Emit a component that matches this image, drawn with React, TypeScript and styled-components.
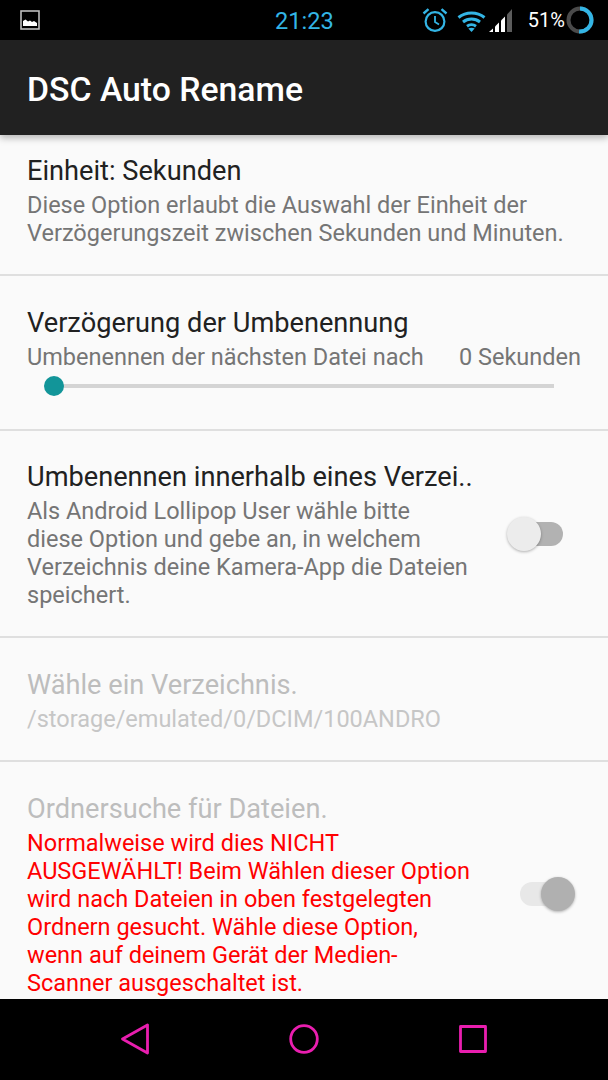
import React from "react"
import styled, { createGlobalStyle } from "styled-components"

const Global = createGlobalStyle`
  html, body { margin: 0; padding: 0; background: #000; }
  body { font-family: Roboto, "Liberation Sans", sans-serif; }
`

const Screen = styled.div`
  width: 608px;
  height: 1080px;
  display: flex;
  flex-direction: column;
  overflow: hidden;
`

const StatusBar = styled.div`
  height: 40px;
  flex: none;
  background: #000;
  position: relative;
  display: flex;
  align-items: center;
  justify-content: space-between;
  padding: 0 14px 0 20px;
  box-sizing: border-box;
`

const Clock = styled.div`
  position: absolute;
  left: 275px;
  top: 7px;
  color: #33b5e5;
  font-size: 23.6px;
  line-height: 28px;
`

const StatusRight = styled.div`
  display: flex;
  align-items: center;
`

const BatteryText = styled.span`
  color: #fff;
  font-size: 20px;
  line-height: 26px;
  margin: 0 1px 0 15px;
`

const AppBar = styled.div`
  height: 95px;
  flex: none;
  background: #212121;
  color: #fff;
  display: flex;
  align-items: center;
  padding: 3px 0 0 27px;
  box-sizing: border-box;
  font-size: 33.75px;
  font-weight: 500;
  position: relative;
  z-index: 1;
  box-shadow: 0 3px 7px rgba(0, 0, 0, 0.28);
`

const List = styled.div`
  flex: 1;
  min-height: 0;
  overflow: hidden;
  background: #fafafa;
`

const Row = styled.div<{ $top: number; $bottom: number }>`
  display: flex;
  align-items: center;
  padding: ${p => p.$top}px 27px ${p => p.$bottom}px;
  border-bottom: 2px solid #dfdfdf;
  &:last-child { border-bottom: 0; }
`

const RowText = styled.div`
  flex: 1;
  min-width: 0;
`

const Title = styled.div<{ $off?: boolean }>`
  font-size: 27.2px;
  line-height: 34px;
  color: ${p => (p.$off ? "#bdbdbd" : "#212121")};
  white-space: nowrap;
`

const Summary = styled.div<{ $off?: boolean; $alert?: boolean }>`
  margin-top: 3px;
  font-size: 23.5px;
  line-height: 28px;
  color: ${p => (p.$alert ? "#ff0000" : p.$off ? "#c6c6c6" : "#757575")};
`

const Narrow = styled.div`
  width: 443px;
`

const SeekLabel = styled(Summary)`
  display: flex;
  justify-content: space-between;
`

const SeekTrack = styled.div`
  position: relative;
  height: 4px;
  margin: 13px 0 14px 27px;
  width: 500px;
  background: #d4d4d4;
`

const SeekThumb = styled.div`
  position: absolute;
  left: -10px;
  top: -8px;
  width: 20px;
  height: 20px;
  border-radius: 50%;
  background: #129599;
`

const SwitchBox = styled.div<{ $inset: number }>`
  position: relative;
  width: 52px;
  height: 36px;
  flex: none;
  margin-right: ${p => p.$inset}px;
  margin-bottom: 2px;
`

const SwitchTrack = styled.div<{ $off?: boolean }>`
  position: absolute;
  top: 6px;
  left: 0;
  width: 52px;
  height: 24px;
  border-radius: 12px;
  background: ${p => (p.$off ? "#e8e8e8" : "#b2b2b2")};
`

const SwitchKnob = styled.div<{ $right?: boolean; $off?: boolean }>`
  position: absolute;
  top: 1px;
  left: ${p => (p.$right ? "21px" : "-4px")};
  width: 34px;
  height: 34px;
  border-radius: 50%;
  background: ${p => (p.$off ? "#b0b0b0" : "#ececec")};
  box-shadow: 0 1px 3px rgba(0, 0, 0, 0.3);
`

const NavBar = styled.div`
  height: 81px;
  flex: none;
  background: #000;
  display: flex;
  align-items: center;
  padding-bottom: 1px;
  box-sizing: border-box;
  padding-left: 121px;
  gap: 140px;
`

function ImageIcon() {
  return (
    <svg width="20" height="20" viewBox="0 0 20 20">
      <rect x="1" y="1" width="18" height="18" fill="#000" stroke="#bdbdbd" strokeWidth="1.6" />
      <path d="M3 16V11L5.5 9.5L8 11.5L10 10.5L12 12L14 11L17 13V16Z" fill="#fff" />
    </svg>
  )
}

function AlarmIcon() {
  return (
    <svg width="26" height="26" viewBox="0 0 26 26" fill="none" stroke="#33b5e5" strokeWidth="2.2">
      <circle cx="13" cy="14.5" r="9.4" />
      <path d="M13 9v6l4 2.5" strokeWidth="1.8" />
      <path d="M1.5 6.5L6.5 2.2M24.5 6.5L19.5 2.2" strokeWidth="2.4" />
    </svg>
  )
}

function WifiIcon() {
  return (
    <svg width="29" height="24" viewBox="0 0 29 24" fill="none" stroke="#33b5e5" strokeWidth="3" style={{ marginLeft: 9 }}>
      <path d="M1.5 9.5C9 3.5 20 3.5 27.5 9.5" />
      <path d="M6 14C11 10 18 10 23 14" />
      <path d="M10 18.2C12.5 16.4 16.5 16.4 19 18.2" />
      <path d="M14.5 24L11.3 20.6C13.5 19.6 15.5 19.6 17.7 20.6Z" fill="#33b5e5" stroke="none" />
    </svg>
  )
}

function SignalIcon() {
  return (
    <svg width="24" height="24" viewBox="0 0 24 24" style={{ marginLeft: 3 }}>
      <path d="M0 24H4V20.5L0 24Z" fill="#fff" />
      <path d="M6 24H10V14.5L6 18.5Z" fill="#fff" />
      <path d="M12 24H16V8.5L12 12.5Z" fill="#fff" />
      <path d="M18 24H23V1L18 6.5Z" fill="#5c5c5c" />
    </svg>
  )
}

function BatteryRing() {
  return (
    <svg width="28" height="28" viewBox="0 0 28 28" fill="none" strokeWidth="4">
      <circle cx="14" cy="14" r="11.5" stroke="#4a4a4a" />
      <circle
        cx="14"
        cy="14"
        r="11.5"
        stroke="#33b5e5"
        strokeDasharray={`${2 * Math.PI * 11.5 * 0.51} 100`}
        transform="rotate(-90 14 14)"
      />
    </svg>
  )
}

function BackIcon() {
  return (
    <svg width="28" height="32" viewBox="0 0 28 32" fill="none" stroke="#e91eaf" strokeWidth="2.8" strokeLinejoin="round">
      <path d="M1.5 16L26.5 2V30Z" />
    </svg>
  )
}

function HomeIcon() {
  return (
    <svg width="30" height="30" viewBox="0 0 30 30" fill="none" stroke="#e91eaf" strokeWidth="2.8">
      <circle cx="15" cy="15" r="13.3" />
    </svg>
  )
}

function RecentIcon() {
  return (
    <svg width="28" height="28" viewBox="0 0 28 28" fill="none" stroke="#e91eaf" strokeWidth="2.8" strokeLinejoin="round">
      <rect x="1.5" y="1.5" width="25" height="25" />
    </svg>
  )
}

export default function App() {
  return (
    <Screen>
      <Global />
      <StatusBar>
        <ImageIcon />
        <Clock>21:23</Clock>
        <StatusRight>
          <AlarmIcon />
          <WifiIcon />
          <SignalIcon />
          <BatteryText>51%</BatteryText>
          <BatteryRing />
        </StatusRight>
      </StatusBar>
      <AppBar>DSC Auto Rename</AppBar>
      <List>
        <Row $top={19} $bottom={27}>
          <RowText>
            <Title>Einheit: Sekunden</Title>
            <Summary>
              Diese Option erlaubt die Auswahl der Einheit der Verzögerungszeit zwischen Sekunden und Minuten.
            </Summary>
          </RowText>
        </Row>
        <Row $top={30} $bottom={27}>
          <RowText>
            <Title>Verzögerung der Umbenennung</Title>
            <SeekLabel>
              <span>Umbenennen der nächsten Datei nach</span>
              <span>0 Sekunden</span>
            </SeekLabel>
            <SeekTrack>
              <SeekThumb />
            </SeekTrack>
          </RowText>
        </Row>
        <Row $top={29} $bottom={27}>
          <RowText>
            <Title>Umbenennen innerhalb eines Verzei..</Title>
            <Narrow>
              <Summary>
                Als Android Lollipop User wähle bitte diese Option und gebe an, in welchem Verzeichnis deine Kamera-App
                die Dateien speichert.
              </Summary>
            </Narrow>
          </RowText>
          <SwitchBox $inset={18}>
            <SwitchTrack />
            <SwitchKnob />
          </SwitchBox>
        </Row>
        <Row $top={30} $bottom={27}>
          <RowText>
            <Title $off>Wähle ein Verzeichnis.</Title>
            <Summary $off>/storage/emulated/0/DCIM/100ANDRO</Summary>
          </RowText>
        </Row>
        <Row $top={30} $bottom={27}>
          <RowText>
            <Title $off>Ordnersuche für Dateien.</Title>
            <Narrow>
              <Summary $alert>
                Normalweise wird dies NICHT AUSGEWÄHLT! Beim Wählen dieser Option wird nach Dateien in oben festgelegten
                Ordnern gesucht. Wähle diese Option, wenn auf deinem Gerät der Medien-Scanner ausgeschaltet ist.
              </Summary>
            </Narrow>
          </RowText>
          <SwitchBox $inset={9}>
            <SwitchTrack $off />
            <SwitchKnob $right $off />
          </SwitchBox>
        </Row>
      </List>
      <NavBar>
        <BackIcon />
        <HomeIcon />
        <RecentIcon />
      </NavBar>
    </Screen>
  )
}
